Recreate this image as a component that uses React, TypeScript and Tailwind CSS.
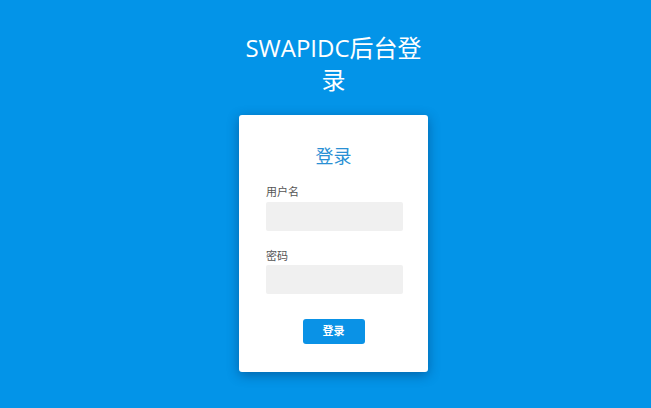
import React from "react";

export default function App() {
  return (
    <div
      className="min-h-[408px] w-full bg-[#0394e8] flex flex-col items-center pl-[16px]"
      style={{ fontFamily: '"Open Sans", "Noto Sans CJK SC", sans-serif' }}
    >
      <h1 className="mt-[32px] w-[190px] text-center text-[24px] leading-[32px] text-white font-normal">
        SWAPIDC后台登录
      </h1>
      <div className="mt-[19px] w-[189px] h-[257px] bg-white rounded-[3px] shadow-[0_3px_12px_rgba(0,40,90,0.45)] flex flex-col px-[27px]">
        <h2 className="mt-[29px] text-center text-[18px] leading-[24px] text-[#2a90d4] font-normal">登录</h2>
        <label className="mt-[16px] text-[11px] leading-[16px] text-[#555]">用户名</label>
        <div className="mt-[2px] h-[29px] w-[137px] bg-[#f0f0f0] rounded-[2px]" />
        <label className="mt-[17px] text-[11px] leading-[16px] text-[#555]">密码</label>
        <div className="mt-[1px] h-[29px] w-[137px] bg-[#f0f0f0] rounded-[2px]" />
        <div className="mt-[25px] flex justify-center">
          <button className="w-[62px] h-[25px] bg-[#0a92e6] rounded-[3px] text-white text-[11px] font-bold">
            登录
          </button>
        </div>
      </div>
    </div>
  );
}
